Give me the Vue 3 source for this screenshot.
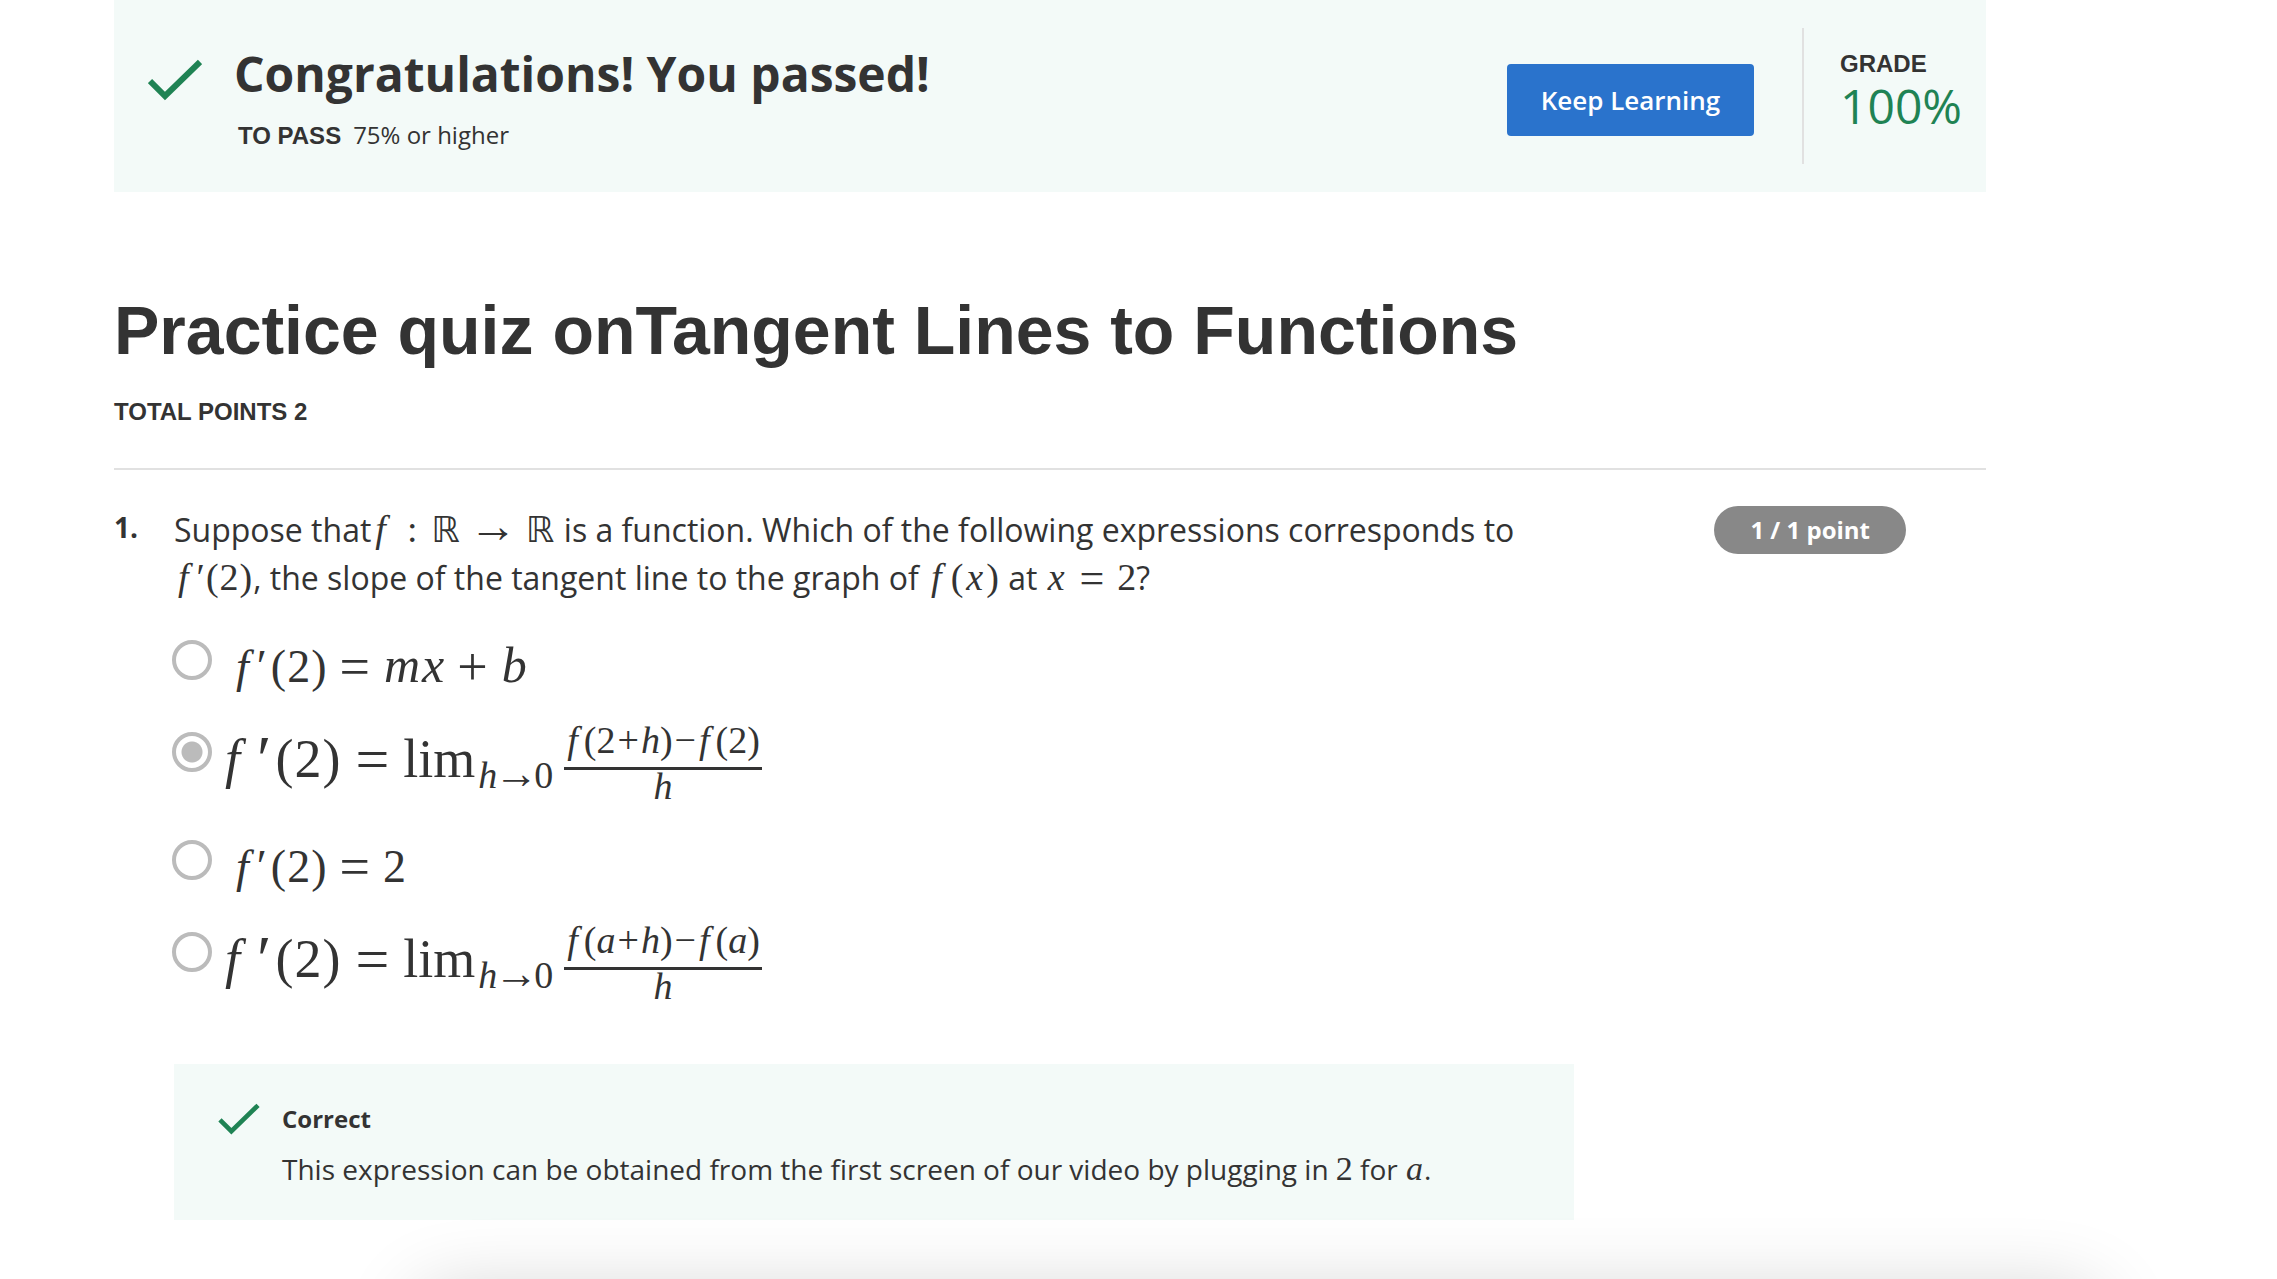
<script setup>
import { ref, h } from 'vue'

const selected = ref('limit-h')

// A formula is a list of tokens: [kind, content]. Kinds map to spacing classes.
const Formula = (props) =>
  h('span', { class: ['math', props.size] }, props.tokens.map(([kind, content]) =>
    kind === 'frac'
      ? h('span', { class: 'frac' }, [
          h('span', { class: 'num' }, content[0].map(([k, c]) => h('span', { class: k }, c))),
          h('span', { class: 'den' }, content[1].map(([k, c]) => h('span', { class: k }, c))),
        ])
      : kind === 'sub'
        ? h('span', { class: 'sub' }, content.map(([k, c]) => h('span', { class: k }, c)))
        : h('span', { class: kind }, content)
  ))
Formula.props = ['tokens', 'size']

const limit = (name) => [
  ['fn', 'f'], ['prime', '′'], ['op', '('], ['n', '2'], ['op', ')'], ['rel', '='], ['n', 'lim'],
  ['sub', [['v', 'h'], ['arrow', '→'], ['n', '0']]],
  ['frac', [
    [['fn', 'f'], ['op', '('], [name === '2' ? 'n' : 'v', name], ['bin', '+'], ['v', 'h'], ['op', ')'],
      ['bin', '−'], ['fn', 'f'], ['op', '('], [name === '2' ? 'n' : 'v', name], ['op', ')']],
    [['v', 'h']],
  ]],
]
const fPrime = [['fn', 'f'], ['prime', '′'], ['op', '('], ['n', '2'], ['op', ')']]

const formulas = {
  map: [['fn', 'f'], ['rel', ':'], ['set', 'ℝ'], ['arrow', '→'], ['set', 'ℝ']],
  slope: fPrime,
  fx: [['fn', 'f'], ['op', '('], ['v', 'x'], ['op', ')']],
  at: [['v', 'x'], ['rel', '='], ['n', '2']],
}

const options = [
  { id: 'line', size: 'medium', tokens: [...fPrime, ['rel', '='], ['v', 'm'], ['v', 'x'], ['bin', '+'], ['v', 'b']] },
  { id: 'limit-h', size: 'large', tokens: limit('2') },
  { id: 'two', size: 'medium', tokens: [...fPrime, ['rel', '='], ['n', '2']] },
  { id: 'limit-a', size: 'large', tokens: limit('a') },
]
</script>

<template>
  <main class="page">
    <header class="banner">
      <svg class="check" viewBox="0 0 54 42" aria-hidden="true">
        <path d="M2 22 L17 37 L52 3" />
      </svg>
      <div class="result">
        <h2>Congratulations! You passed!</h2>
        <p><strong>TO PASS</strong>75% or higher</p>
      </div>
      <button type="button" class="keep">Keep Learning</button>
      <div class="grade">
        <strong>GRADE</strong>
        <span>100%</span>
      </div>
    </header>

    <h1>Practice quiz onTangent Lines to Functions</h1>
    <p class="total">TOTAL POINTS 2</p>

    <section class="question">
      <span class="index">1.</span>
      <div class="body">
        <p id="prompt" class="prompt">Suppose that<Formula :tokens="formulas.map" size="wide" /> is a function. Which of the following expressions corresponds to <Formula :tokens="formulas.slope" />, the slope of the tangent line to the graph of <Formula :tokens="formulas.fx" /> at <Formula :tokens="formulas.at" />?</p>
        <div class="options" role="radiogroup" aria-labelledby="prompt">
          <label v-for="o in options" :key="o.id" class="option" :class="o.size + '-row'">
            <input v-model="selected" type="radio" name="answer" :value="o.id" />
            <Formula :tokens="o.tokens" :size="o.size" />
          </label>
        </div>
        <div class="feedback">
          <svg class="check small" viewBox="0 0 54 42" aria-hidden="true">
            <path d="M2 22 L17 37 L52 3" />
          </svg>
          <div>
            <strong>Correct</strong>
            <p>This expression can be obtained from the first screen of our video by plugging in <Formula :tokens="[['n', '2']]" size="little" /> for <Formula :tokens="[['v', 'a']]" size="little" />.</p>
          </div>
        </div>
      </div>
      <div class="points"><span>1 / 1 point</span></div>
    </section>
    <div class="shade" aria-hidden="true"></div>
  </main>
</template>

<style>
body {
  background: #fff;
  overflow-x: hidden;
}
.math {
  font-family: "Liberation Serif", serif;
  font-size: 38px;
  line-height: 1;
  white-space: nowrap;
}
.math .fn,
.math .v {
  font-style: italic;
}
.math .fn {
  margin: 0 8px 0 4px;
}
.math .v {
  margin: 0 2px;
}
.math .op {
  margin: 0 1px;
}
.math .rel {
  margin: 0 13px;
  font-size: 44px;
  line-height: 0;
  vertical-align: -3px;
}
.math .bin {
  margin: 0 2px;
}
.math .arrow {
  font-size: 48px;
  line-height: 0;
  margin: 0 8px;
}
.math .set {
  font-family: "DejaVu Sans", sans-serif;
  font-size: 36px;
  line-height: 0;
  margin: 0 1px;
}
.math.wide .rel {
  font-size: 38px;
  vertical-align: baseline;
}
.math.little {
  font-size: 34px;
}
.math.little .v {
  margin: 0 1px;
}
.math.medium {
  font-size: 46px;
  margin-top: 4px;
}
.math.medium .fn {
  margin: 0 8px 0 6px;
}
.math.medium .prime {
  margin-right: 3px;
}
.math.medium .v {
  font-size: 50px;
  line-height: 0;
  margin: 0 1px;
}
.math.medium .rel,
.math.medium .bin {
  font-size: 54px;
  line-height: 0;
  margin: 0 13px 0 12px;
  vertical-align: -3px;
}
.math.large {
  display: flex;
  font-size: 54px;
  line-height: 54px;
}
.math.large .fn {
  margin: 0 17px 0 5px;
}
.math.large .prime {
  font-size: 66px;
  margin-right: 3px;
}
.math.large .rel {
  margin: 0 14px;
  font-size: 60px;
  line-height: 54px;
}
.math .sub {
  font-size: 38px;
  line-height: 38px;
  margin: 24px 0 0 2px;
}
.math.large .sub .v {
  margin: 0 1px;
}
.math .sub .arrow {
  font-size: 44px;
  margin: 0 -4px;
}
.math .frac {
  font-size: 38px;
  display: flex;
  flex-direction: column;
  align-items: center;
  margin: -12px 0 0 11px;
  line-height: 40px;
}
.math .frac .num {
  padding: 0 2px 7px;
  border-bottom: 3px solid #333;
}
.math.large .frac .fn {
  margin: 0 6px 0 1px;
}
.math.large .frac .v,
.math.large .frac .op {
  margin: 0;
}
.math .frac .den {
  line-height: 32px;
}
</style>

<style scoped>
.page {
  padding: 0 291px 0 114px;
  color: #333;
  font-family: "Open Sans", sans-serif;
}
h1, h2, p {
  margin: 0;
}
.banner {
  display: flex;
  align-items: flex-start;
  height: 192px;
  box-sizing: border-box;
  padding: 28px 24px 28px 34px;
  background: #f3faf8;
}
.check {
  width: 54px;
  height: 42px;
  flex: none;
  margin-top: 31px;
}
.check path {
  fill: none;
  stroke: #1f8354;
  stroke-width: 6;
}
.result {
  flex: 1;
  margin: 14px 0 0 32px;
}
h2 {
  font-size: 48px;
  line-height: 64px;
}
.result p {
  font-size: 24px;
  line-height: 32px;
  margin: 13px 0 0 4px;
}
.result strong, .grade strong, .total {
  font: bold 24px/32px "Liberation Sans", sans-serif;
}
.result strong {
  margin-right: 12px;
}
.keep {
  height: 72px;
  width: 247px;
  margin-top: 36px;
  border: 0;
  border-radius: 4px;
  background: #2a73cc;
  color: #fff;
  font: 600 26px "Open Sans", sans-serif;
}
.grade {
  align-self: stretch;
  margin-left: 48px;
  padding: 20px 0 0 36px;
  border-left: 2px solid #e1e1e1;
}
.grade strong, .grade span {
  display: block;
}
.grade span {
  color: #1f8354;
  font-size: 48px;
  line-height: 52px;
}
h1 {
  font: bold 68px/80px "Liberation Sans", sans-serif;
  margin-top: 98px;
}
.total {
  margin-top: 26px;
}
.question {
  display: grid;
  grid-template-columns: 60px minmax(0, 1fr) 412px;
  margin-top: 40px;
  padding-top: 36px;
  border-top: 2px solid #e1e1e1;
}
.index {
  font-size: 28px;
  font-weight: bold;
  line-height: 42px;
}
.prompt {
  font-size: 32px;
  line-height: 48px;
}
.options {
  margin-top: 38px;
}
.option {
  display: flex;
  align-items: flex-start;
  height: 92px;
}
.option.large-row {
  height: 108px;
}
.option .math {
  margin-left: 18px;
}
.option .math.large {
  margin-left: 8px;
}
.option input {
  appearance: none;
  box-sizing: border-box;
  width: 40px;
  height: 40px;
  flex: none;
  margin: 0 0 0 -2px;
  border: 4px solid #bbb;
  border-radius: 50%;
}
.option input:checked {
  background: radial-gradient(circle, #bbb 10px, #fff 11px);
}
.feedback {
  display: flex;
  margin-top: 24px;
  height: 156px;
  box-sizing: border-box;
  padding: 39px 44px 0;
  background: #f3faf8;
}
.check.small {
  width: 42px;
  height: 32px;
  margin: 0 22px 0 0;
}
.feedback strong {
  display: block;
  font-size: 24px;
  line-height: 32px;
}
.feedback p {
  font-size: 28px;
  line-height: 40px;
  margin-top: 14px;
}
.points {
  display: flex;
  justify-content: flex-end;
  align-items: flex-start;
  padding-right: 80px;
}
.points span {
  border-radius: 24px;
  background: #888;
  color: #fff;
  font-size: 24px;
  font-weight: bold;
  line-height: 48px;
  padding: 0 36px;
}
.shade {
  position: fixed;
  top: 100%;
  left: 420px;
  right: 180px;
  height: 200px;
  border-radius: 20px;
  box-shadow: 0 16px 80px rgba(0, 0, 0, 0.2);
}
</style>
